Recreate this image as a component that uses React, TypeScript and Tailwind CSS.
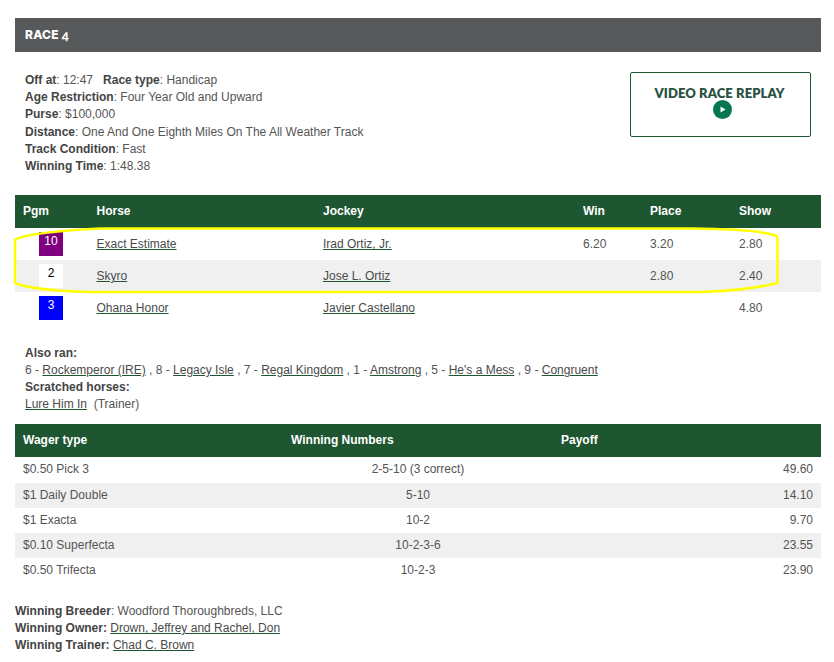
const horses = [
  { pgm: '10', box: 'bg-[#800080] text-white', horse: 'Exact Estimate', jockey: 'Irad Ortiz, Jr.', win: '6.20', place: '3.20', show: '2.80', row: 'bg-white' },
  { pgm: '2', box: 'bg-white text-black', horse: 'Skyro', jockey: 'Jose L. Ortiz', win: '', place: '2.80', show: '2.40', row: 'bg-[#f0f0f0]' },
  { pgm: '3', box: 'bg-[#0000ff] text-white', horse: 'Ohana Honor', jockey: 'Javier Castellano', win: '', place: '', show: '4.80', row: 'bg-white' },
];

const wagers = [
  { type: '$0.50 Pick 3', numbers: '2-5-10 (3 correct)', payoff: '49.60', row: 'bg-white h-[26px]' },
  { type: '$1 Daily Double', numbers: '5-10', payoff: '14.10', row: 'bg-[#f0f0f0] h-[25px]' },
  { type: '$1 Exacta', numbers: '10-2', payoff: '9.70', row: 'bg-white h-[25px]' },
  { type: '$0.10 Superfecta', numbers: '10-2-3-6', payoff: '23.55', row: 'bg-[#f0f0f0] h-[25px]' },
  { type: '$0.50 Trifecta', numbers: '10-2-3', payoff: '23.90', row: 'bg-white h-[25px]' },
];

const alsoRan = [
  { n: '6', name: 'Rockemperor (IRE)' },
  { n: '8', name: 'Legacy Isle' },
  { n: '7', name: 'Regal Kingdom' },
  { n: '1', name: 'Amstrong' },
  { n: '5', name: "He's a Mess" },
  { n: '9', name: 'Congruent' },
];

function Link({ children }: { children: React.ReactNode }) {
  return <a className="text-[#4a4a4a] underline decoration-[#1e5631]">{children}</a>;
}

export default function App() {
  return (
    <div className="relative h-[662px] w-[834px] overflow-hidden bg-white pt-[18px] pl-[15px] pr-[13px] font-['Liberation_Sans',Arial,sans-serif] text-[12px] leading-[17.2px] text-[#555]">
      <div className="flex h-[34px] items-center bg-[#58595b] pl-[10px] font-['Inter',sans-serif] text-[12px] font-extrabold tracking-[0.2px] text-white">
        RACE <span className="mt-[2px] ml-[3px] font-['Lato',sans-serif] text-[13px] font-black [font-feature-settings:'onum']">4</span>
      </div>

      {/* Race info */}
      <div className="flex h-[143px] justify-between pt-[20px] pl-[10px] pr-[10px]">
        <div>
          <div><b className="text-[#444]">Off at</b>: 12:47 &nbsp; <b className="text-[#444]">Race type</b>: Handicap</div>
          <div><b className="text-[#444]">Age Restriction</b>: Four Year Old and Upward</div>
          <div><b className="text-[#444]">Purse</b>: $100,000</div>
          <div><b className="text-[#444]">Distance</b>: One And One Eighth Miles On The All Weather Track</div>
          <div><b className="text-[#444]">Track Condition</b>: Fast</div>
          <div><b className="text-[#444]">Winning Time</b>: 1:48.38</div>
        </div>
        <div className="flex h-[65px] w-[181px] flex-col items-center rounded-[2px] border border-[#1e5631] pt-[12px] pr-[2px]">
          <span className="font-['Lato',sans-serif] text-[13px] leading-[16px] font-extrabold tracking-[0.1px] text-[#2a5244]">VIDEO RACE REPLAY</span>
          <span className="-mt-px ml-[6px] flex h-[19px] w-[19px] items-center justify-center rounded-full bg-[#06774f]">
            <svg width="9" height="9" viewBox="0 0 9 9"><path d="M2.5 1.5l5 3-5 3z" fill="#fff" /></svg>
          </span>
        </div>
      </div>

      {/* Finishers */}
      <div className="flex h-[33px] items-center bg-[#1e5631] font-bold text-white">
        <span className="w-[81.5px] pl-[8px]">Pgm</span>
        <span className="w-[226.5px]">Horse</span>
        <span className="w-[260px]">Jockey</span>
        <span className="w-[67px]">Win</span>
        <span className="w-[89px]">Place</span>
        <span>Show</span>
      </div>
      {horses.map(h => (
        <div key={h.horse} className={`flex h-[32px] items-center ${h.row}`}>
          <span className="w-[81.5px] pl-[24px]">
            <span className={`flex h-[24px] w-[24px] justify-center pt-[1px] ${h.box}`}>{h.pgm}</span>
          </span>
          <span className="w-[226.5px] pt-[2px]"><Link>{h.horse}</Link></span>
          <span className="w-[260px] pt-[2px]"><Link>{h.jockey}</Link></span>
          <span className="w-[67px] pt-[2px]">{h.win}</span>
          <span className="w-[89px] pt-[2px]">{h.place}</span>
          <span className="pt-[2px]">{h.show}</span>
        </div>
      ))}

      {/* Also ran */}
      <div className="h-[100px] pt-[20px] pl-[10px]">
        <div className="pt-[1px]"><b className="text-[#444]">Also ran:</b></div>
        <div>
          {alsoRan.map((a, i) => (
            <span key={a.n}>{i > 0 && ' , '}{a.n} - <Link>{a.name}</Link></span>
          ))}
        </div>
        <div><b className="text-[#444]">Scratched horses:</b></div>
        <div className="-mt-px"><Link>Lure Him In</Link> &nbsp;(Trainer)</div>
      </div>

      {/* Wagers */}
      <div className="flex h-[33px] items-center bg-[#1e5631] font-bold text-white">
        <span className="w-[276px] pl-[8px]">Wager type</span>
        <span className="w-[270px]">Winning Numbers</span>
        <span>Payoff</span>
      </div>
      {wagers.map(w => (
        <div key={w.type} className={`flex items-center px-[8px] ${w.row}`}>
          <span className="w-[250px]">{w.type}</span>
          <span className="w-[290px] text-center">{w.numbers}</span>
          <span className="flex-1 text-right">{w.payoff}</span>
        </div>
      ))}

      {/* Winner connections */}
      <div className="pt-[20px]">
        <div><b className="text-[#444]">Winning Breeder</b>: Woodford Thoroughbreds, LLC</div>
        <div><b className="text-[#444]">Winning Owner:</b> <Link>Drown, Jeffrey and Rachel, Don</Link></div>
        <div><b className="text-[#444]">Winning Trainer:</b> <Link>Chad C. Brown</Link></div>
      </div>

      {/* Hand-drawn yellow highlight over the top two finishers */}
      <svg className="absolute top-[226px] left-[12px]" width="770" height="70" viewBox="0 0 770 70" fill="none">
        <path d="M88 2.5 H680 C720 3 750 5 762 9 Q765.5 10 765.5 13 V57 C745 62 720 65 690 66 H75 C45 65 15 62 3 57 V14 C10 9 40 5 88 2.5 Z" stroke="#ffff00" strokeWidth="2.5" />
      </svg>
    </div>
  );
}
